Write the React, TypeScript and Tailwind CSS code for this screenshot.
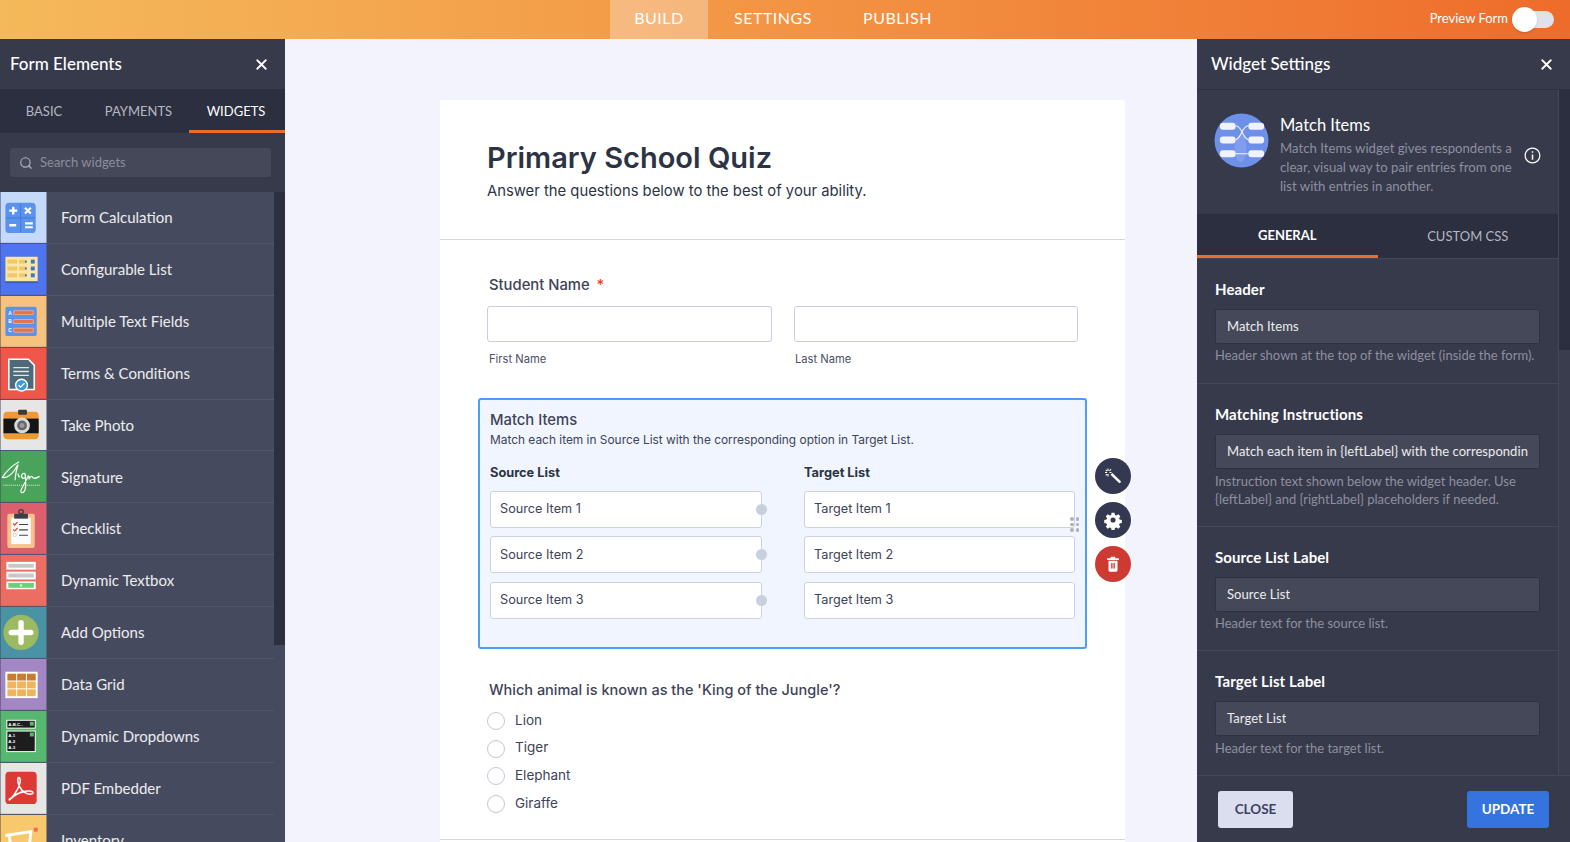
import React from "react";
import { Search, X } from "lucide-react";

const circular = "font-['Lato','Open_Sans',sans-serif]";
const inter = "font-['Inter',sans-serif]";

function Calc() {
  return (
    <svg viewBox="0 0 47 52" className="h-full w-full">
      <rect width="47" height="52" fill="#c5d9fb" />
      <rect x="5" y="11" width="31" height="31" rx="4" fill="#5a93ee" />
      <path d="M20.5 12v29M6 26.500h29" stroke="#3f74cd" strokeWidth="0.8" />
      <path d="M9 19h8M13 15v8M9 34h7" stroke="#fff" strokeWidth="2.4" />
      <path d="M25 16l6 6M31 16l-6 6M25 32h8M25 36h8" stroke="#fff" strokeWidth="2.2" />
    </svg>
  );
}
function ConfigList() {
  return (
    <svg viewBox="0 0 47 52" className="h-full w-full">
      <rect width="47" height="52" fill="#4f74f0" />
      <rect x="5" y="13" width="33" height="27" fill="#3e5fb4" />
      <rect x="5" y="13" width="33" height="25" fill="#fbe6a8" />
      {[16, 23, 30].map((y) => (
        <g key={y}>
          <rect x="7" y={y} width="10" height="4" fill="#f0c868" />
          <rect x="19" y={y} width="7" height="4" fill="#f0c868" />
          <rect x="25" y={y + 1} width="2" height="2" fill="#4f74d0" />
          <rect x="31" y={y} width="4" height="4" fill="#3a78c8" />
        </g>
      ))}
    </svg>
  );
}
function MultiText() {
  return (
    <svg viewBox="0 0 47 52" className="h-full w-full">
      <rect width="47" height="52" fill="#f6c27d" />
      <rect x="5" y="11" width="32" height="30" rx="2" fill="#5a93ee" />
      {[15, 24, 33].map((y, i) => (
        <g key={y}>
          <rect x="13" y={y - 0.5} width="21" height="5" rx="1" fill="#e9a58d" />
          <rect x="14" y={y + 0.5} width="19" height="3" fill="#e8714c" />
          <text x="8" y={y + 4} fontSize="5" fontWeight="700" fill="#fff" fontFamily="Liberation Sans, sans-serif">
            {"ABC"[i]}
          </text>
        </g>
      ))}
    </svg>
  );
}
function Terms() {
  return (
    <svg viewBox="0 0 47 52" className="h-full w-full">
      <rect width="47" height="52" fill="#f0564a" />
      <path d="M8.500 11.500h20l6 6v25h-26z" fill="#4e6a78" stroke="#fff" strokeWidth="1.600" />
      <path d="M13 20h16M13 24h16M13 28h16" stroke="#dfe6ea" strokeWidth="1.400" />
      <circle cx="21.500" cy="38" r="6" fill="#3f9ad8" stroke="#fff" strokeWidth="1.400" />
      <path d="M18.500 38l2 2 4-4" stroke="#fff" strokeWidth="1.400" fill="none" />
    </svg>
  );
}
function Photo() {
  return (
    <svg viewBox="0 0 47 52" className="h-full w-full">
      <rect width="47" height="52" fill="#e6e6e6" />
      <rect x="3" y="12" width="36" height="28" rx="4" fill="#ee9a33" />
      <rect x="18" y="10" width="9" height="5" rx="1" fill="#3a3a3a" />
      <rect x="3" y="19" width="36" height="15" fill="#151515" />
      <circle cx="22" cy="26" r="8" fill="#d9d9d9" />
      <circle cx="22" cy="26" r="5" fill="#666" />
      <circle cx="22" cy="26" r="2.500" fill="#999" />
    </svg>
  );
}
function Sign() {
  return (
    <svg viewBox="0 0 47 52" className="h-full w-full">
      <rect width="47" height="52" fill="#4aa35a" />
      <path
        d="M19 11C12 15 5 22 2 27c5 1 9-3 12-7 2-3 3-5 4-6-2 6-3 11-3 16M18 23c0 3 1 4 2 3M25 23c-3-1-5 3-2 5 3 0 3-3 2-5 1 7 1 13 0 17-2 4-5 3-4 0 1-3 4-7 7-14 1-2 2 1 1 3 2-3 3-4 4-2 1 2 3 1 7-1"
        stroke="#eef6ee"
        strokeWidth="1.300"
        fill="none"
      />
      <path d="M3 35h37" stroke="#eaf5ea" strokeWidth="1" strokeDasharray="1 1" />
    </svg>
  );
}
function Check() {
  return (
    <svg viewBox="0 0 47 52" className="h-full w-full">
      <rect width="47" height="52" fill="#dc5f6b" />
      <rect x="7" y="11" width="28" height="35" rx="2" fill="#f6c38f" />
      <rect x="11" y="15" width="20" height="27" fill="#fbfbfb" />
      <rect x="14" y="11" width="14" height="5" fill="#3c3f4a" />
      <circle cx="21" cy="9" r="2.200" fill="none" stroke="#3c3f4a" strokeWidth="1.400" />
      <path d="M13 21l1.500 1.500 3-3M13 27l1.500 1.500 3-3" stroke="#e0493a" strokeWidth="1.300" fill="none" />
      <rect x="13" y="31" width="3" height="3" fill="none" stroke="#ccc" strokeWidth="0.700" />
      <path d="M19 22h9M19 27.500h9M19 33h9" stroke="#444" strokeWidth="1.200" />
    </svg>
  );
}
function Textbox() {
  return (
    <svg viewBox="0 0 47 52" className="h-full w-full">
      <rect width="47" height="52" fill="#eb6e62" />
      {[7, 17].map((y) => (
        <g key={y}>
          <rect x="6" y={y} width="30" height="8" fill="#fff" />
          <rect x="8" y={y + 2} width="26" height="4" fill="#c8c8c8" />
        </g>
      ))}
      <rect x="6" y="27" width="30" height="8" fill="#fff" />
      <rect x="8" y="28.500" width="26" height="5" fill="#66d07a" />
      <path d="M19.500 31h3M21 29.500v3" stroke="#fff" strokeWidth="0.800" />
    </svg>
  );
}
function AddOpt() {
  return (
    <svg viewBox="0 0 47 52" className="h-full w-full">
      <rect width="47" height="52" fill="#4a93a5" />
      <circle cx="21" cy="26" r="18" fill="#9bba62" />
      <path d="M21 16v20M11 26h20" stroke="#fff" strokeWidth="5.500" strokeLinecap="round" />
    </svg>
  );
}
function Grid() {
  return (
    <svg viewBox="0 0 47 52" className="h-full w-full">
      <rect width="47" height="52" fill="#a386c4" />
      <rect x="5" y="13" width="33" height="27" fill="#fff" />
      {[0, 1, 2].map((c) =>
        [0, 1, 2].map((r) => (
          <rect key={`${c}-${r}`} x={7 + c * 10} y={15 + r * 8} width="9" height="7" fill={r === 0 ? "#c97c30" : "#f2b45a"} />
        ))
      )}
    </svg>
  );
}
function Drop() {
  const t = { fontSize: 4.500, fontWeight: 700, fill: "#fff", fontFamily: "Liberation Sans, sans-serif" };
  return (
    <svg viewBox="0 0 47 52" className="h-full w-full">
      <rect width="47" height="52" fill="#56b86e" />
      <rect x="6" y="9" width="30" height="9" fill="#fff" />
      <rect x="7" y="10" width="28" height="7" fill="#1d1d1d" />
      <rect x="30" y="11" width="4" height="4" fill="#56b86e" />
      <text x="8" y="15.500" {...t}>A.B.C..</text>
      <rect x="6" y="20" width="30" height="22" fill="#fff" />
      <rect x="7" y="21" width="28" height="20" fill="#1d1d1d" />
      <rect x="30" y="22" width="4" height="4" fill="#56b86e" />
      <text x="8" y="26.500" {...t}>A.1</text>
      <text x="8" y="33" {...t}>A.2</text>
      <text x="8" y="39" {...t}>A.3</text>
    </svg>
  );
}
function Pdf() {
  return (
    <svg viewBox="0 0 47 52" className="h-full w-full">
      <rect width="47" height="52" fill="#e6e6e6" />
      <rect x="5" y="9" width="32" height="33" rx="4" fill="#dd3a35" />
      <path
        d="M9 37c3-1 9-9 11-17 1-4-1-6-2-5-1 2 0 8 4 13 3 3 8 5 11 3 1-2-3-3-8-2-6 1-12 5-15 8-1 1-1 1-1 0z"
        fill="none"
        stroke="#fff"
        strokeWidth="1.600"
      />
    </svg>
  );
}
function Inventory() {
  return (
    <svg viewBox="0 0 47 52" className="h-full w-full">
      <rect width="47" height="52" fill="#f8c96c" />
      <path d="M5 21l26-4-2 20M9 22l3 20" stroke="#fff" strokeWidth="3" fill="none" />
      <rect x="34" y="13" width="4" height="4" fill="#ef6a5a" />
    </svg>
  );
}

const widgets: [string, React.FC][] = [
  ["Form Calculation", Calc],
  ["Configurable List", ConfigList],
  ["Multiple Text Fields", MultiText],
  ["Terms & Conditions", Terms],
  ["Take Photo", Photo],
  ["Signature", Sign],
  ["Checklist", Check],
  ["Dynamic Textbox", Textbox],
  ["Add Options", AddOpt],
  ["Data Grid", Grid],
  ["Dynamic Dropdowns", Drop],
  ["PDF Embedder", Pdf],
  ["Inventory", Inventory],
];

function TopBar() {
  return (
    <header className={`h-[39px] shrink-0 bg-gradient-to-r from-[#f4b95a] to-[#ee6c2b] flex items-center relative ${circular}`}>
      <nav className="flex h-full ml-[610px] text-white text-[16px] tracking-[0.5px]">
        <div className="w-[98px] flex items-center justify-center bg-white/30 pb-[3px]">BUILD</div>
        <div className="w-[130px] flex items-center justify-center pb-[3px]">SETTINGS</div>
        <div className="w-[119px] flex items-center justify-center pb-[3px]">PUBLISH</div>
      </nav>
      <div className="ml-auto mr-[16px] flex items-center gap-[5px] text-white text-[13px]">
        <span className="pb-[1px]">Preview Form</span>
        <div className="relative w-[41px] h-[17px] rounded-full bg-[#dfe2ea]">
          <div className="absolute -left-[1px] -top-[4px] w-[25px] h-[25px] rounded-full bg-white shadow" />
        </div>
      </div>
    </header>
  );
}

function LeftPanel() {
  return (
    <aside className={`w-[285px] shrink-0 bg-[#373a4b] flex flex-col overflow-hidden ${circular}`}>
      <div className="h-[50px] shrink-0 flex items-center justify-between pl-[10px] pr-[15px] text-white text-[17px] font-medium">
        <span>Form Elements</span>
        <X size={17} strokeWidth={2.5} />
      </div>
      <div className="h-[44px] shrink-0 bg-[#2c2f3f] flex text-[13px] text-[#b4b7c4]">
        <div className="w-[88px] flex items-center justify-center pt-[2px]">BASIC</div>
        <div className="w-[101px] flex items-center justify-center pt-[2px]">PAYMENTS</div>
        <div className="w-[96px] flex items-center justify-center text-white border-b-[3px] border-[#ee6c2b] pt-[5px] pr-[2px]">WIDGETS</div>
      </div>
      <div className="h-[59px] shrink-0 flex items-center pl-[10px] pr-[14px]">
        <div className="h-[29px] w-full rounded-[3px] bg-[#454859] flex items-center gap-[7px] pl-[9px] text-[13px] text-[#8a8d9d]">
          <Search size={14} className="text-[#b0b3c0]" />
          <span>Search widgets</span>
        </div>
      </div>
      <div className="flex-1 flex overflow-hidden">
        <ul className="w-[274px] shrink-0">
          {widgets.map(([name, Icon]) => (
            <li key={name} className="h-[51.880px] flex bg-[#464a5e] border-b border-[#52566a] box-border">
              <div className="w-[47px] h-full shrink-0">
                <Icon />
              </div>
              <div className="pl-[14px] flex items-center text-white/90 text-[15px]">{name}</div>
            </li>
          ))}
        </ul>
        <div className="flex-1 flex flex-col bg-[#464a5e]">
          <div className="h-[453px] bg-[#2c2f3f]" />
        </div>
      </div>
    </aside>
  );
}

function Field({ label, help, value, h, helpTop = 2 }: { label: string; help: React.ReactNode; value: string; h: number; helpTop?: number }) {
  return (
    <section className="border-b border-[#44475a] px-[18px] pt-[20px] box-border" style={{ height: h }}>
      <h3 className="text-white font-bold text-[15px] tracking-[0.1px] leading-[20px]">{label}</h3>
      <div className="mt-[10px] h-[35px] rounded-[2px] bg-[#454859] border border-[#2e3142] flex items-center px-[11px] text-[13px] tracking-[0.06px] text-white/90">
        <span className="block overflow-hidden whitespace-nowrap">{value}</span>
      </div>
      <p className="text-[13px] leading-[18px] text-[#8d909f]" style={{ marginTop: helpTop }}>
        {help}
      </p>
    </section>
  );
}

function RightPanel() {
  return (
    <aside className={`w-[373px] shrink-0 ml-auto bg-[#373a4b] flex flex-col overflow-hidden ${circular}`}>
      <div className="h-[51px] shrink-0 flex items-center justify-between pl-[14px] pr-[15px] text-white text-[17px] font-medium border-b border-[#2c2f3f]">
        <span>Widget Settings</span>
        <X size={17} strokeWidth={2.5} />
      </div>
      <div className="flex-1 flex overflow-hidden">
        <div className="w-[362px] shrink-0 flex flex-col overflow-hidden border-r border-[#44475a] box-border">
          <div className="h-[124px] shrink-0 flex items-start pl-[17px] pt-[23px]">
            <svg viewBox="0 0 56 56" className="w-[55px] h-[55px] shrink-0">
              <circle cx="28" cy="28" r="27.500" fill="#6e90e8" />
              <ellipse cx="27" cy="36" rx="6" ry="14" fill="#7f9eee" />
              <g fill="#f0f3fd">
                <rect x="6" y="10" width="16" height="7" rx="3" />
                <rect x="35" y="10" width="16" height="7" rx="3" />
                <rect x="6" y="24" width="16" height="7" rx="3" />
                <rect x="35" y="24" width="16" height="7" rx="3" />
                <rect x="6" y="38" width="16" height="7" rx="3" />
                <rect x="35" y="38" width="16" height="7" rx="3" />
              </g>
              <path d="M22 13c7 0 7 14 13 14M35 13c-7 0-7 14-13 14M22 41.500h13" stroke="#f0f3fd" strokeWidth="1.200" fill="none" />
            </svg>
            <div className="ml-[11px] w-[238px]">
              <div className="text-white text-[16.500px] leading-[24px]">Match Items</div>
              <p className="text-[13.200px] leading-[19px] text-[#8d909f] mt-[2px]">
                Match Items widget gives respondents a clear, visual way to pair entries from one list with entries in another.
              </p>
            </div>
            <svg viewBox="0 0 18 18" className="w-[17px] h-[17px] mt-[34px] ml-[6px] shrink-0" fill="none" stroke="#fff" strokeWidth="1.300">
              <circle cx="9" cy="9" r="7.800" />
              <path d="M9 8v5.500M9 4.500v1.500" strokeWidth="1.600" />
            </svg>
          </div>
          <div className="h-[44px] shrink-0 flex bg-[#2c2f3f] border-b border-[#44475a] text-[13px] box-content">
            <div className="w-[181px] flex items-center justify-center text-white border-b-[3px] border-[#ee6c2b] font-bold pt-[3px]">GENERAL</div>
            <div className="w-[181px] flex items-center justify-center text-[#b4b7c4] pt-[1px]">CUSTOM CSS</div>
          </div>
          <div className="flex-1 overflow-hidden">
            <Field h={125} label="Header" value="Match Items" help="Header shown at the top of the widget (inside the form)." />
            <Field
              h={143}
              helpTop={3}
              label="Matching Instructions"
              value="Match each item in {leftLabel} with the corresponding option in {rightLabel}."
              help={
                <>
                  Instruction text shown below the widget header. Use
                  <br />
                  {"{leftLabel} and {rightLabel} placeholders if needed."}
                </>
              }
            />
            <Field h={124} label="Source List Label" value="Source List" help="Header text for the source list." />
            <Field h={125} helpTop={3} label="Target List Label" value="Target List" help="Header text for the target list." />
          </div>
        </div>
        <div className="flex-1 flex flex-col bg-[#3a3d4e]">
          <div className="h-[260px] bg-[#2c2f3f]" />
        </div>
      </div>
      <div className="h-[67px] shrink-0 border-t border-[#44475a] flex items-center justify-between pl-[21px] pr-[21px] text-[13.500px] font-bold">
        <button className="w-[75px] h-[37px] rounded-[3px] bg-[#dadeef] text-[#3f4266]">CLOSE</button>
        <button className="w-[82px] h-[37px] rounded-[3px] bg-[#3573de] text-white">UPDATE</button>
      </div>
    </aside>
  );
}

function Radio({ label }: { label: string }) {
  return (
    <div className="h-[27.700px] flex items-center gap-[10px] text-[13.500px] text-[#3e4358]">
      <span className="w-[18px] h-[18px] rounded-full border border-[#c3c7d8] bg-white shrink-0" />
      <span className="-mt-[2px]">{label}</span>
    </div>
  );
}

function ListItem({ label, dot }: { label: string; dot?: boolean }) {
  return (
    <div className="relative h-[37px] rounded-[3px] border border-[#ccd2e3] bg-white flex items-center pl-[9px] text-[12.700px] text-[#3e4358]">
      {label}
      {dot && <span className="absolute -right-[6px] top-[12px] w-[11px] h-[11px] rounded-full bg-[#c9cfde]" />}
    </div>
  );
}

function Form() {
  return (
    <main className={`flex-1 min-w-0 bg-[#f3f3fd] pl-[155px] pt-[61px] overflow-hidden ${inter}`}>
      <div className="w-[685px] bg-white rounded-t-[2px] h-[800px]">
        <div className="h-[140px] border-b border-[#d3d5e0] pl-[47px] pt-[40px] box-border">
          <h1 className="text-[29px] leading-[36px] font-semibold text-[#2c3345]">Primary School Quiz</h1>
          <p className="text-[14.800px] leading-[20px] text-[#2c3345] mt-[5px]">Answer the questions below to the best of your ability.</p>
        </div>
        <div className="pl-[47px] pt-[35px] h-[158px] box-border">
          <div className="pl-[2px] text-[14.800px] leading-[20px] font-medium text-[#3e4358]">
            Student Name <span className="text-[#f0352b] ml-[3px]">*</span>
          </div>
          <div className="flex gap-[22px] mt-[11px]">
            <div className="w-[285px]">
              <div className="h-[36px] rounded-[3px] border border-[#c9cddd] bg-white" />
              <div className="pl-[2px] text-[11.200px] leading-[16px] mt-[9px] text-[#4b5066]">First Name</div>
            </div>
            <div className="w-[284px]">
              <div className="h-[36px] rounded-[3px] border border-[#c9cddd] bg-white" />
              <div className="pl-[1px] text-[11.200px] leading-[16px] mt-[9px] text-[#4b5066]">Last Name</div>
            </div>
          </div>
        </div>
        <div className="relative ml-[38px] w-[609px] h-[251px] rounded-[3px] border-2 border-[#4d9df5] bg-[#f0f5ff] px-[10px] pt-[10px] box-border">
          <div className="text-[14.800px] leading-[20px] font-medium text-[#3e4358]">Match Items</div>
          <div className="text-[11.900px] leading-[18px] text-[#3e4358] mt-[1px]">Match each item in Source List with the corresponding option in Target List.</div>
          <div className="flex gap-[42px] mt-[16px]">
            <div className="w-[272px] flex flex-col gap-[8.500px]">
              <div className="text-[12.800px] font-bold leading-[16px] text-[#2c3345] mb-[1px]">Source List</div>
              <ListItem label="Source Item 1" dot />
              <ListItem label="Source Item 2" dot />
              <ListItem label="Source Item 3" dot />
            </div>
            <div className="w-[271px] flex flex-col gap-[8.500px]">
              <div className="text-[12.800px] font-bold leading-[16px] text-[#2c3345] mb-[1px]">Target List</div>
              <ListItem label="Target Item 1" />
              <ListItem label="Target Item 2" />
              <ListItem label="Target Item 3" />
            </div>
          </div>
          <div className="absolute left-[590px] top-[117px] grid grid-cols-2 gap-[2px]">
            {[0, 1, 2, 3, 4, 5].map((i) => (
              <span key={i} className="w-[3.500px] h-[3.500px] rounded-full bg-[#aab0c2]" />
            ))}
          </div>
          <div className="absolute left-[615px] top-[58px] flex flex-col gap-[7.800px]">
            <div className="w-[36px] h-[36px] rounded-full bg-[#343850] flex items-center justify-center">
              <svg viewBox="0 0 20 20" className="w-[20px] h-[20px]" fill="#fff">
                <path d="M7.500 8.800l1.800-1.800 8.300 7.900c1 1-.8 2.800-1.800 1.800z" />
                <path d="M5 2.500v2.500M5 8v2.500M2 6.500h2.200M6.500 6.500h2M2.800 3.800L4 5M8 3.200L6.500 5M2.800 9.500L4 8" stroke="#fff" strokeWidth="1.100" />
              </svg>
            </div>
            <div className="w-[36px] h-[36px] rounded-full bg-[#343850] flex items-center justify-center">
              <svg viewBox="0 0 24 24" className="w-[20px] h-[20px]" fill="#fff">
                <path
                  fillRule="evenodd"
                  d="M10 2h4l.6 3 1.900.800 2.600-1.700 2.800 2.800-1.700 2.600.800 1.900 3 .6v4l-3 .6-.8 1.900 1.700 2.600-2.800 2.800-2.600-1.700-1.900.800-.6 3h-4l-.6-3-1.900-.8-2.600 1.700-2.800-2.800 1.700-2.600-.8-1.900-3-.6v-4l3-.6.800-1.900-1.700-2.600 2.800-2.800 2.600 1.700 1.900-.8zM12 8.500a3.500 3.500 0 100 7 3.500 3.500 0 000-7z"
                  transform="translate(1.500 1.500) scale(0.88)"
                />
              </svg>
            </div>
            <div className="w-[36px] h-[36px] rounded-full bg-[#cc3a32] flex items-center justify-center">
              <svg viewBox="0 0 20 20" className="w-[18px] h-[18px]" fill="#fff">
                <path d="M3.500 3.500h13v2h-13zM7.500 2h5v1.500h-5z" />
                <path fillRule="evenodd" d="M5 6.500h10V17a1.500 1.500 0 01-1.500 1.500h-7A1.500 1.500 0 015 17zM8 9v6h1.500V9zM10.500 9v6H12V9z" />
              </svg>
            </div>
          </div>
        </div>
        <div className="pl-[47px] pt-[31px]">
          <div className="pl-[2px] text-[14.500px] leading-[20px] font-medium text-[#3e4358] mb-[7px]">Which animal is known as the 'King of the Jungle'?</div>
          <Radio label="Lion" />
          <Radio label="Tiger" />
          <Radio label="Elephant" />
          <Radio label="Giraffe" />
        </div>
        <div className="border-b border-[#d3d5e0] mt-[21px]" />
      </div>
    </main>
  );
}

export default function App() {
  return (
    <div className="w-[1570px] h-[842px] flex flex-col overflow-hidden">
      <TopBar />
      <div className="flex-1 flex min-h-0">
        <LeftPanel />
        <Form />
        <RightPanel />
      </div>
    </div>
  );
}
